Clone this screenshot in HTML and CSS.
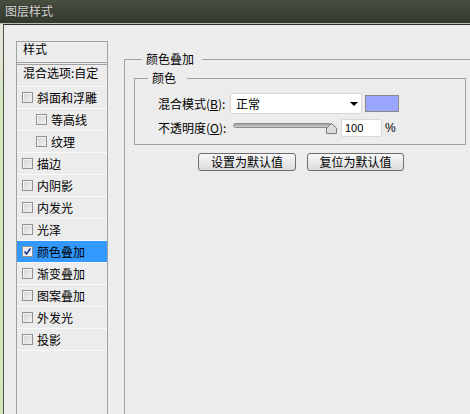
FILE: index.html
```html
<!DOCTYPE html>
<html lang="zh-CN">
<head>
<meta charset="utf-8">
<title>图层样式</title>
<link rel="stylesheet" href="styles.css">
</head>
<body>
<div class="titlebar"><span class="title">图层样式</span></div>
<div class="main">
  <div class="desk"></div>
  <div class="frame">
    <div class="styles-list">
      <div class="list-head">样式</div>
      <div class="list-blend">混合选项:自定</div>
      <div class="item"><span class="cb"></span>斜面和浮雕</div>
      <div class="item sub"><span class="cb"></span>等高线</div>
      <div class="item sub"><span class="cb"></span>纹理</div>
      <div class="item"><span class="cb"></span>描边</div>
      <div class="item"><span class="cb"></span>内阴影</div>
      <div class="item"><span class="cb"></span>内发光</div>
      <div class="item"><span class="cb"></span>光泽</div>
      <div class="item selected"><span class="cb checked"><svg width="9" height="9" viewBox="0 0 9 9"><path d="M1.5 4.5 L3.5 7 L7.5 1.5" fill="none" stroke="#22389a" stroke-width="1.6"/></svg></span>颜色叠加</div>
      <div class="item"><span class="cb"></span>渐变叠加</div>
      <div class="item"><span class="cb"></span>图案叠加</div>
      <div class="item"><span class="cb"></span>外发光</div>
      <div class="item"><span class="cb"></span>投影</div>
    </div>
    <div class="panel">
      <div class="group outer">
        <div class="legend">颜色叠加</div>
        <div class="group inner">
          <div class="legend">颜色</div>
          <div class="field-row row-blend">
            <span class="field-label">混合模式(<u>B</u>):</span>
            <div class="select"><span>正常</span><span class="arrow"></span></div>
            <div class="swatch"></div>
          </div>
          <div class="field-row row-opacity">
            <span class="field-label">不透明度(<u>O</u>):</span>
            <div class="slider">
              <div class="track"></div>
              <svg class="thumb" width="11" height="11" viewBox="0 0 11 11"><path d="M0.5 10.5 V5 L5.5 0.5 L10.5 5 V10.5 Z" fill="#dcdcdc" stroke="#7a7a7a"/></svg>
            </div>
            <div class="num">100</div>
            <span class="pct">%</span>
          </div>
        </div>
        <div class="buttons">
          <button class="btn btn-set">设置为默认值</button>
          <button class="btn btn-reset">复位为默认值</button>
        </div>
      </div>
    </div>
  </div>
</div>
</body>
</html>
```
FILE: styles.css
```css
body {
  margin: 0;
  width: 470px;
  height: 414px;
  overflow: hidden;
  background: #ececec;
  font: 12px/14px "Noto Sans CJK SC", sans-serif;
  color: #000;
}

/* window caption */
.titlebar {
  height: 23px;
  background: linear-gradient(#484f40, #333a2b);
  border-bottom: 1px solid #b8bbb0;
}
.title {
  display: block;
  padding-left: 5px;
  line-height: 21px;
  color: #d6d6d6;
  text-shadow: 0 0 2px #222;
}

.main {
  display: flex;
  height: 390px;
}
.desk {
  width: 3px;
  flex: none;
  background: linear-gradient(#e3e4de 0, #d6e6bd 90px, #d3e7b6 100%);
}
.frame {
  flex: 1;
  display: flex;
  border-top: 1px solid #2d2f2a;
  border-left: 1px solid #4d5445;
  padding: 16px 0 0 12px;
  overflow: hidden;
}

/* style list on the left */
.styles-list {
  width: 92px;
  height: 400px;
  flex: none;
  box-sizing: border-box;
  border: 1px solid #a0a0a0;
}
.list-head {
  height: 20px;
  padding-left: 6px;
  border-bottom: 3px double #a0a0a0;
}
.list-blend {
  height: 20px;
  padding: 1px 0 0 6px;
  border-bottom: 1px solid #fafafa;
}
.item {
  height: 21px;
  display: flex;
  align-items: center;
  padding-left: 5px;
  border-bottom: 1px solid #fafafa;
}
.item.sub {
  padding-left: 19px;
}
.item.selected {
  background: #3399ff;
}
.cb {
  width: 11px;
  height: 11px;
  flex: none;
  box-sizing: border-box;
  margin-right: 4px;
  border: 1px solid #929292;
  background: linear-gradient(135deg, #d4d4d4, #f2f2f2);
  box-shadow: inset 1px 1px 0 #f4f4f4;
  display: flex;
  align-items: center;
  justify-content: center;
}
.cb.checked {
  background: linear-gradient(135deg, #e2e4ee, #f8f8fc);
}

/* right side settings */
.panel {
  flex: 1;
  margin-left: 16px;
  padding-top: 18px;
}
.group.outer {
  height: 400px;
  border-top: 1px solid #a0a0a0;
  border-left: 1px solid #a0a0a0;
}
.legend {
  width: max-content;
  margin-top: -8px;
  line-height: 14px;
  background: #ececec;
}
.outer > .legend {
  margin-left: 17px;
  padding: 0 8px 0 4px;
}
.group.inner {
  width: 332px;
  box-sizing: border-box;
  margin: 12px 0 0 9px;
  padding-bottom: 7px;
  border: 1px solid #a0a0a0;
}
.inner > .legend {
  margin-left: 13px;
  padding: 0 11px 0 4px;
}

.field-row {
  display: flex;
  align-items: center;
  padding-left: 23px;
}
.row-blend {
  height: 21px;
  margin-top: 8px;
}
.row-opacity {
  height: 18px;
  margin-top: 5px;
}
.field-label {
  width: 72px;
  flex: none;
  white-space: nowrap;
}
.select {
  width: 132px;
  height: 21px;
  box-sizing: border-box;
  display: flex;
  align-items: center;
  padding-left: 5px;
  border: 1px solid #d8d8d8;
  border-radius: 2px;
  background: #fff;
}
.arrow {
  margin-left: auto;
  margin-right: 3px;
  width: 0;
  height: 0;
  border-left: 4px solid transparent;
  border-right: 4px solid transparent;
  border-top: 4px solid #000;
}
.swatch {
  width: 34px;
  height: 17px;
  box-sizing: border-box;
  margin-left: 3px;
  background: #99a5ff;
  border: 1px solid #8a8a8a;
}

.slider {
  position: relative;
  width: 108px;
  height: 18px;
  flex: none;
}
.track {
  width: 99px;
  height: 5px;
  margin: 4px 0 0 3px;
  box-sizing: border-box;
  border: 1px solid #8c8c8c;
  border-radius: 3px;
  background: linear-gradient(#9c9c9c, #d0d0d0);
}
.thumb {
  position: absolute;
  left: 96px;
  top: 4px;
}
.num {
  width: 41px;
  height: 18px;
  box-sizing: border-box;
  margin-left: 3px;
  padding-left: 3px;
  border: 1px solid #d8d8d8;
  border-radius: 2px;
  background: #fff;
  font: 11px/16px "Liberation Sans", sans-serif;
}
.pct {
  margin-left: 3px;
  font: 12px/14px "Liberation Sans", sans-serif;
}

.buttons {
  display: flex;
  gap: 11px;
  margin: 8px 0 0 73px;
}
.btn {
  height: 18px;
  box-sizing: border-box;
  padding: 0;
  border: 1px solid #6e6e6e;
  border-radius: 3px;
  background: linear-gradient(#f8f8f8, #dcdcdc);
  font: 12px/14px "Noto Sans CJK SC", sans-serif;
  color: #000;
}
.btn-set {
  width: 98px;
}
.btn-reset {
  width: 97px;
}
```
